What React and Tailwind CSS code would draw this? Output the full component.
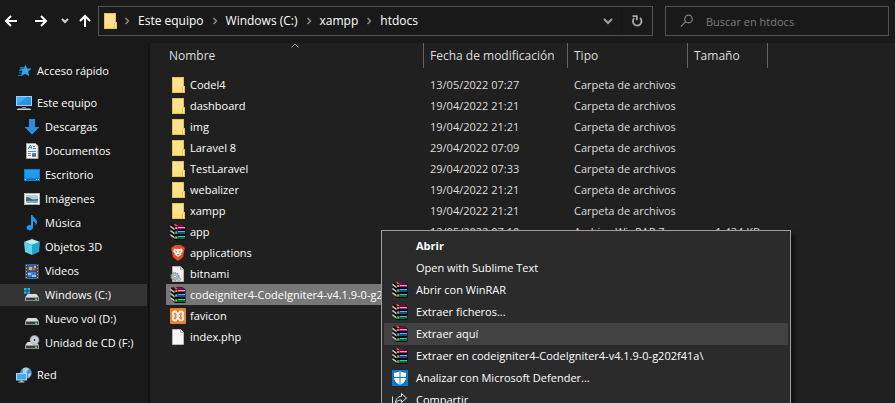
import React from "react";

const svg = "h-4 w-4 shrink-0";

function FolderIcon() {
  return (
    <svg className={svg} viewBox="0 0 16 16" shapeRendering="crispEdges" aria-hidden="true">
      <path d="M2 0h12v9h1v7H2z" fill="#e8c34a" />
      <path d="M3 1h10v9h-1v5H3z" fill="#ffe391" />
      <path d="M13 10h1v5h-1z" fill="#fff0b0" />
      <path d="M3 11h9v4H3z" fill="#ffdf80" />
    </svg>
  );
}

function WinRarIcon() {
  return (
    <svg className={svg} viewBox="0 0 16 16" aria-hidden="true">
      <path d="M1 .5L12 0l3.500 2.500V16H5L.5 12z" fill="#0a0a0a" />
      <path d="M2 .5L12 .2 15 2.500 5.500 3z" fill="#7a0c4c" />
      <path d="M5 3h10v2H5z" fill="#b0206f" />
      <path d="M8 3h7v1H8z" fill="#f29bd0" />
      <path d="M5 7h10v3H5z" fill="#0a4f94" />
      <path d="M8 7h7v1H8z" fill="#58b4f2" />
      <path d="M5 12h10v3H5z" fill="#07654a" />
      <path d="M8 12h7v1H8z" fill="#3ccf94" />
      <path d="M.5 1.500l4 3v1.700l-4-3zM.5 5.700l4 3v1.800l-4-3zM.5 10l4 3v1.800l-4-3z" fill="#f0f0f0" />
      <path d="M1 3l3.500 2.500M1 7.300L4.500 10M1 11.700l3.500 2.600" stroke="#777" strokeWidth=".5" />
      <path d="M4 .6l2 0 1.500 1.200H5.700zM5.500 3h1.300v2H5.500zM5.500 7.500h1.300v2H5.500zM5.500 12.500h1.300v2H5.500z" fill="#d9c61a" />
    </svg>
  );
}

function BraveIcon() {
  return (
    <svg className={svg} viewBox="0 0 16 16" aria-hidden="true">
      <path d="M5 0h6l1.500 1.500 1.500.2.900 2.300-.6 1.500-1.200 6.500L8.900 15.600H7.100L2.900 12 1.700 5.500 1.100 4 2 1.700l1.500-.2z" fill="#f4481e" />
      <path d="M4.300 3.500L6.500 4 8 3.700 9.500 4l2.200-.5L13 6l-1.900 2.500.3 1.300-1.900 1L8 12.300l-1.500-1.500-1.900-1 .3-1.300L3 6z" fill="#fff" />
      <path d="M5 5.800l2 .7-.7 1.500zM11 5.800l-2 .7.700 1.500zM6.500 9.700L8 9l1.500.7L8 10.500z" fill="#f4481e" />
    </svg>
  );
}

function GearFileIcon() {
  return (
    <svg className={svg} viewBox="0 0 16 16" aria-hidden="true">
      <path d="M2.500.5h8l3 3v12h-11z" fill="#f3f3f3" stroke="#b5b5b5" />
      <path d="M10.500.5v3h3" fill="#ddd" stroke="#aaa" />
      <circle cx="5" cy="10.500" r="3.600" fill="#c3c8cc" stroke="#8d959b" strokeWidth="2" strokeDasharray="1.600 .7" />
      <circle cx="5" cy="10.500" r="1.300" fill="#fff" stroke="#7f888f" strokeWidth=".8" />
      <circle cx="9" cy="13.200" r="1.700" fill="#c3c8cc" stroke="#7f888f" strokeDasharray="1 .7" />
    </svg>
  );
}

function XamppIcon() {
  return (
    <svg className={svg} viewBox="0 0 16 16" aria-hidden="true">
      <rect width="16" height="16" rx="1" fill="#f37f2c" />
      <path d="M5 3.500C2.500 3.500 2 6.500 4 8c-2 1.500-1.500 4.500 1 4.500 2 0 1.500-2.500 3-2.500s1 2.500 3 2.500c2.500 0 3-3 1-4.500 2-1.500 1.500-4.500-1-4.500-2 0-1.500 2.500-3 2.500S7 3.500 5 3.500z" fill="none" stroke="#fff" strokeWidth="1.900" strokeLinejoin="round" />
      <path d="M6 8h4" stroke="#fff" strokeWidth="1.500" />
    </svg>
  );
}

function FileIcon() {
  return (
    <svg className={svg} viewBox="0 0 16 16" aria-hidden="true">
      <path d="M2.500.5h8l3 3v12h-11z" fill="#f6f6f6" stroke="#b8b8b8" />
      <path d="M10.500.5v3h3" fill="#e0e0e0" stroke="#aaa" />
    </svg>
  );
}

function StarIcon() {
  return (
    <svg className={svg} viewBox="0 0 16 16" aria-hidden="true">
      <path d="M9.500 1.500l1.700 3.900 4.500.2-3.500 2.900 1 4.700-4-2.500-4.200 2.600 1.400-4.700L3.600 5.600l4.300-.2z" fill="#2ea3ee" />
      <path d="M4 4.500h4M3 7.500H5M3 10h3M2 12.500h3" stroke="#1976bd" strokeWidth="1" />
    </svg>
  );
}

function ComputerIcon() {
  return (
    <svg className={svg} viewBox="0 0 16 16" aria-hidden="true">
      <rect x=".5" y="1.500" width="15" height="9" fill="#43aef5" stroke="#9bd3f7" />
      <path d="M1 10L11 2h4v8z" fill="#2a93e0" />
      <path d="M6 12h4v1H6z" fill="#8a8f94" />
      <path d="M2 13.500h12l1.500 1.500H.5z" fill="#cfd4d8" />
    </svg>
  );
}

function DownloadIcon() {
  return (
    <svg className={svg} viewBox="0 0 16 16" aria-hidden="true">
      <path d="M5 0h6v8h4.500L8 15.500.5 8H5z" fill="#2f8ae2" />
    </svg>
  );
}

function DocumentIcon() {
  return (
    <svg className={svg} viewBox="0 0 16 16" aria-hidden="true">
      <path d="M2.500.5h9l2.500 2.500v12.500H2.500z" fill="#f7f7f7" stroke="#aaa" />
      <path d="M4 6l2.500-4L8 6M5 4.700h3M9 3.500h2M9 5.500h3" fill="none" stroke="#1e86d4" />
      <path d="M4 8.500h8M4 10.500h3M4 12.500h3" stroke="#7b8791" />
      <path d="M8 10h4v3.500H8z" fill="#3b8bd0" />
      <path d="M8 12h4v1.500H8z" fill="#3c6f58" />
    </svg>
  );
}

function DesktopIcon() {
  return (
    <svg className={svg} viewBox="0 0 16 16" shapeRendering="crispEdges" aria-hidden="true">
      <path d="M0 2h16v12H0z" fill="#0f7fd6" />
      <path d="M1 3h14v8H1z" fill="#1e9bf5" />
      <path d="M1 12h1v1H1zM12 12h1v1h-1zM14 12h1v1h-1z" fill="#b9e1ff" />
      <path d="M3 12h8v1H3z" fill="#0c6fc0" />
    </svg>
  );
}

function PictureIcon() {
  return (
    <svg className={svg} viewBox="0 0 16 16" aria-hidden="true">
      <rect x=".5" y="2.500" width="15" height="11" fill="#fff" stroke="#b4b4b4" />
      <path d="M2 4h12v8H2z" fill="#a9d0ea" />
      <path d="M2 6.500c3-1 5 1.500 7 2L14 8v4H2z" fill="#3d6b63" />
      <path d="M2 10c4-.5 8 0 12-.5V12H2z" fill="#7fb0c8" />
    </svg>
  );
}

function MusicIcon() {
  return (
    <svg className={svg} viewBox="0 0 16 16" aria-hidden="true">
      <path d="M7 0h1.500c.3 2.500 4.500 3.500 4.500 7 0 1.500-.6 2.600-1.500 3.500.6-2.500-.8-3.700-2.500-4.200v6.200A3.200 2.700 0 1 1 7 10.200z" fill="#169bf0" />
    </svg>
  );
}

function CubeIcon() {
  return (
    <svg className={svg} viewBox="0 0 16 16" aria-hidden="true">
      <path d="M8 0l8 3-8 3-8-3z" fill="#b5f0f8" />
      <path d="M0 3l8 3v10l-7-3z" fill="#5fd3e4" />
      <path d="M16 3L8 6v10l7-3z" fill="#1fa8c9" />
    </svg>
  );
}

function VideoIcon() {
  return (
    <svg className={svg} viewBox="0 0 16 16" shapeRendering="crispEdges" aria-hidden="true">
      <path d="M1 1h14v15H1z" fill="#4a4a4a" />
      <path d="M4 1h8v7H4z" fill="#2d63c8" />
      <path d="M4 9h8v7H4z" fill="#3a7bdc" />
      <path d="M5 4h3v3H5zM10 3h2v2h-2z" fill="#e4b732" />
      <path d="M8 5h3v2H8z" fill="#c94f3c" />
      <path d="M4 10h3v2H4zM8 12h4v2H8z" fill="#9cc7ef" />
      <path d="M4 14h8v1H4z" fill="#174382" />
      <path d="M2 2h1v1H2zM2 5h1v1H2zM2 8h1v1H2zM2 11h1v1H2zM2 14h1v1H2zM13 2h1v1h-1zM13 5h1v1h-1zM13 8h1v1h-1zM13 11h1v1h-1zM13 14h1v1h-1z" fill="#b8b8b8" />
    </svg>
  );
}

function DriveBody() {
  return (
    <>
      <path d="M3.500 7h9L15 10.500H1z" fill="#d9dcdf" />
      <path d="M1 10.500h14V14H1z" fill="#a4a8ac" />
      <path d="M2 11h12v2.300H2z" fill="#3b3e41" />
      <path d="M11 11.500h2V13h-2z" fill="#43dd51" />
    </>
  );
}

function WindowsDriveIcon() {
  return (
    <svg className={svg} viewBox="0 0 16 16" aria-hidden="true">
      <DriveBody />
      <path d="M0 1h2.600v2.500H0zM3.400 1H6v2.500H3.400zM0 4.200h2.600v2.500H0zM3.400 4.200H6v2.500H3.400z" fill="#12b3f2" />
    </svg>
  );
}

function DriveIcon() {
  return (
    <svg className={svg} viewBox="0 0 16 16" aria-hidden="true">
      <DriveBody />
    </svg>
  );
}

function CdDriveIcon() {
  return (
    <svg className={svg} viewBox="0 0 16 16" aria-hidden="true">
      <DriveBody />
      <circle cx="10.500" cy="5" r="4.500" fill="#c9ccce" stroke="#999" strokeWidth=".6" />
      <circle cx="10.500" cy="5" r="1.500" fill="#333" stroke="#eee" />
    </svg>
  );
}

function NetworkIcon() {
  return (
    <svg className={svg} viewBox="0 0 16 16" aria-hidden="true">
      <circle cx="10" cy="6" r="5.800" fill="#4e96c6" />
      <path d="M7 2c2-2 5-1 6 0l-2 2-1 3-3-1zM12 7l3-1c0 2-1 4-2.500 5z" fill="#a5d4ee" />
      <rect x=".5" y="6.500" width="10" height="6.500" fill="#3fa9f2" stroke="#a9dcfb" />
      <path d="M4.500 13.500h2v1h-2zM2.500 14.500h6v1h-6z" fill="#c8cdd1" />
    </svg>
  );
}

function DefenderIcon() {
  return (
    <svg className={svg} viewBox="0 0 16 16" aria-hidden="true">
      <path d="M0 0h16v16H0z" fill="#0a78d4" />
      <path d="M8 1c1.500 1.200 3.500 1.800 6 1.800V7c0 3.500-2.200 6.300-6 8-3.800-1.700-6-4.500-6-8V2.800C4.500 2.800 6.500 2.200 8 1z" fill="#fff" />
      <path d="M8 1v14M2 7.500h12" stroke="#0a78d4" />
    </svg>
  );
}

function ShareIcon() {
  return (
    <svg className={svg} viewBox="0 0 16 16" fill="none" stroke="#e8e8e8" aria-hidden="true">
      <path d="M9.500 1.500L14.500 6l-5 4.500V8C6.500 8 4.700 9 3.500 11.500 3.700 7.500 5.500 4.500 9.500 4.200zM.5 4.500v11h12V12" />
    </svg>
  );
}

function Chevron() {
  return (
    <svg className="h-2 w-1.5 shrink-0" viewBox="0 0 6 8" fill="none" stroke="#8b8b8b" strokeWidth="1.500" aria-hidden="true">
      <path d="M1.500 1l3 3-3 3" />
    </svg>
  );
}

const places = [
  [{ label: "Acceso rápido", Icon: StarIcon }],
  [
    { label: "Este equipo", Icon: ComputerIcon },
    { label: "Descargas", Icon: DownloadIcon, nested: true },
    { label: "Documentos", Icon: DocumentIcon, nested: true },
    { label: "Escritorio", Icon: DesktopIcon, nested: true },
    { label: "Imágenes", Icon: PictureIcon, nested: true },
    { label: "Música", Icon: MusicIcon, nested: true },
    { label: "Objetos 3D", Icon: CubeIcon, nested: true },
    { label: "Videos", Icon: VideoIcon, nested: true },
    { label: "Windows (C:)", Icon: WindowsDriveIcon, nested: true, current: true },
    { label: "Nuevo vol (D:)", Icon: DriveIcon, nested: true },
    { label: "Unidad de CD (F:)", Icon: CdDriveIcon, nested: true },
  ],
  [{ label: "Red", Icon: NetworkIcon }],
];

const folder = "Carpeta de archivos";

const files = [
  { name: "Codel4", Icon: FolderIcon, date: "13/05/2022 07:27", type: folder },
  { name: "dashboard", Icon: FolderIcon, date: "19/04/2022 21:21", type: folder },
  { name: "img", Icon: FolderIcon, date: "19/04/2022 21:21", type: folder },
  { name: "Laravel 8", Icon: FolderIcon, date: "29/04/2022 07:09", type: folder },
  { name: "TestLaravel", Icon: FolderIcon, date: "29/04/2022 07:33", type: folder },
  { name: "webalizer", Icon: FolderIcon, date: "19/04/2022 21:21", type: folder },
  { name: "xampp", Icon: FolderIcon, date: "19/04/2022 21:21", type: folder },
  { name: "app", Icon: WinRarIcon, date: "12/05/2022 07:10", type: "Archivo WinRAR Z...", size: "1.434 KB" },
  { name: "applications", Icon: BraveIcon },
  { name: "bitnami", Icon: GearFileIcon },
  { name: "codeigniter4-CodeIgniter4-v4.1.9-0-g202f41a", Icon: WinRarIcon, selected: true },
  { name: "favicon", Icon: XamppIcon },
  { name: "index.php", Icon: FileIcon },
];

const menu = [
  { label: "Abrir", bold: true },
  { label: "Open with Sublime Text" },
  { label: "Abrir con WinRAR", Icon: WinRarIcon },
  { label: "Extraer ficheros...", Icon: WinRarIcon },
  { label: "Extraer aquí", Icon: WinRarIcon, active: true },
  { label: "Extraer en codeigniter4-CodeIgniter4-v4.1.9-0-g202f41a\\", Icon: WinRarIcon },
  { label: "Analizar con Microsoft Defender...", Icon: DefenderIcon },
  { label: "Compartir", Icon: ShareIcon },
];

function TopBar() {
  return (
    <header className="flex h-[43px] shrink-0 items-start pt-1.5 pr-1.5 pl-[3px]">
      <nav aria-label="Navegación" className="flex h-[30px] w-[95px] shrink-0 items-center">
        <button type="button" aria-label="Atrás">
          <svg className="h-4 w-4" viewBox="0 0 16 16" fill="none" stroke="#fff" strokeWidth="2" aria-hidden="true">
            <path d="M14 8H3M8 3L3 8l5 5" />
          </svg>
        </button>
        <button type="button" aria-label="Adelante" className="ml-3.5">
          <svg className="h-4 w-4" viewBox="0 0 16 16" fill="none" stroke="#fff" strokeWidth="2" aria-hidden="true">
            <path d="M2 8h11M8 3l5 5-5 5" />
          </svg>
        </button>
        <button type="button" aria-label="Ubicaciones recientes" className="ml-3">
          <svg className="h-2 w-2" viewBox="0 0 8 8" fill="none" stroke="#d0d0d0" strokeWidth="2" aria-hidden="true">
            <path d="M1 2l3 3 3-3" />
          </svg>
        </button>
        <button type="button" aria-label="Subir" className="ml-2">
          <svg className="h-4 w-4" viewBox="0 0 16 16" fill="none" stroke="#fff" strokeWidth="2" aria-hidden="true">
            <path d="M8 14V3.500M3 8l5-5 5 5" />
          </svg>
        </button>
      </nav>

      <div className="mr-3 flex h-[30px] min-w-0 flex-1 items-center border border-[#535353] pl-[3px]">
        <FolderIcon />
        <ol className="flex min-w-0 flex-1 items-center gap-2 pl-1.5 text-white">
          {["Este equipo", "Windows (C:)", "xampp", "htdocs"].map((part) => (
            <li key={part} className="flex items-center gap-2 whitespace-nowrap">
              <Chevron />
              <a href="#" className="text-xs">{part}</a>
            </li>
          ))}
        </ol>
        <button type="button" aria-label="Ubicaciones anteriores" className="flex h-full w-7 items-center justify-center border-r border-[#151515]">
          <svg className="h-2.5 w-2.5" viewBox="0 0 10 10" fill="none" stroke="#a0a0a0" strokeWidth="2" aria-hidden="true">
            <path d="M1 3l4 4 4-4" />
          </svg>
        </button>
        <button type="button" aria-label="Actualizar" className="flex h-full w-[30px] items-center justify-center">
          <svg className="h-3 w-3" viewBox="0 0 12 12" fill="none" stroke="#a8a8a8" strokeWidth="1.800" aria-hidden="true">
            <path d="M9 3A4.300 4.300 0 1 1 3.200 3.200M1.500 1.200h4.300v4" />
          </svg>
        </button>
      </div>

      <label className="flex h-[30px] w-56 shrink-0 items-center gap-3 border border-[#535353] pl-3.5">
        <span className="sr-only">Buscar en htdocs</span>
        <svg className="h-3.5 w-3.5 shrink-0" viewBox="0 0 14 14" fill="none" stroke="#858585" strokeWidth="1.200" aria-hidden="true">
          <circle cx="8.500" cy="5" r="3.800" />
          <path d="M5.700 7.700L.8 12.700" />
        </svg>
        <input type="search" placeholder="Buscar en htdocs" className="h-full w-full min-w-0 bg-transparent text-[11px] outline-none placeholder:text-[#7c7c7c]" />
      </label>
    </header>
  );
}

function Sidebar() {
  return (
    <aside className="flex w-[150px] shrink-0 flex-col gap-2.5 border-r-2 border-[#121212] pt-[17px] pr-px">
      {places.map((group) => (
        <ul key={group[0].label} className="flex flex-col gap-0.5">
          {group.map(({ label, Icon, nested, current }) => (
            <li key={label}>
              <a
                href="#"
                aria-current={current ? "true" : undefined}
                className={`flex h-[22px] items-center gap-[5px] whitespace-nowrap text-white ${nested ? "pl-6" : "pl-4"} ${current ? "bg-[#333333]" : ""}`}
              >
                <Icon />
                {label}
              </a>
            </li>
          ))}
        </ul>
      ))}
    </aside>
  );
}

function FileTable() {
  return (
    <main className="min-w-0 flex-1 bg-[#202020] pl-4">
      <table className="w-[602px] table-fixed border-collapse text-left">
        <colgroup>
          <col className="w-[258px]" />
          <col className="w-36" />
          <col className="w-[120px]" />
          <col className="w-20" />
        </colgroup>
        <thead className="text-xs text-[#dedede]">
          <tr>
            <th scope="col" aria-sort="ascending" className="p-0 pb-1.5 font-normal">
              <div className="relative flex h-[25px] items-center border-r border-[#636363] pl-[3px]">
                Nombre
                <svg className="absolute inset-x-0 top-0 mx-auto h-[5px] w-2" viewBox="0 0 8 5" fill="none" stroke="#9a9a9a" aria-hidden="true">
                  <path d="M.5 4.500L4 1l3.500 3.500" />
                </svg>
              </div>
            </th>
            {["Fecha de modificación", "Tipo", "Tamaño"].map((title) => (
              <th key={title} scope="col" className="p-0 pb-1.5 font-normal">
                <div className="flex h-[25px] items-center border-r border-[#636363] pl-1.5 whitespace-nowrap">{title}</div>
              </th>
            ))}
          </tr>
        </thead>
        <tbody className="text-[#dedede]">
          {files.map(({ name, Icon, date, type, size, selected }) => (
            <tr key={name} aria-selected={selected ? "true" : undefined} className={selected ? "bg-[#777777]" : ""}>
              <td className="p-0">
                <div className="flex h-[21px] items-center gap-1 pl-1 text-white">
                  <Icon />
                  <span className="truncate">{name}</span>
                </div>
              </td>
              <td className="p-0 pl-1.5 whitespace-nowrap">{date}</td>
              <td className="p-0 pl-1.5 whitespace-nowrap">{type}</td>
              <td className="p-0 pr-2 text-right whitespace-nowrap">{size}</td>
            </tr>
          ))}
        </tbody>
      </table>
    </main>
  );
}

function ContextMenu() {
  return (
    <div role="menu" className="absolute top-[230px] left-[381px] w-[410px] border border-[#a0a0a0] bg-[#2b2b2b] px-0.5 py-1 shadow-[4px_4px_4px_rgba(0,0,0,0.5)]">
      {menu.map(({ label, Icon, bold, active }) => (
        <button
          key={label}
          type="button"
          role="menuitem"
          className={`flex h-[22px] w-full items-center gap-2 pl-2 text-left whitespace-nowrap text-white ${bold ? "font-bold" : ""} ${active ? "bg-[#414141]" : ""}`}
        >
          {Icon ? <Icon /> : <span className="w-4" />}
          {label}
        </button>
      ))}
    </div>
  );
}

export default function App() {
  return (
    <div className="relative flex h-screen flex-col overflow-hidden bg-[#191919] font-['Open_Sans','Noto_Sans',sans-serif] text-[11px] leading-4 text-white">
      <TopBar />
      <div className="flex min-h-0 flex-1">
        <Sidebar />
        <FileTable />
      </div>
      <ContextMenu />
    </div>
  );
}
